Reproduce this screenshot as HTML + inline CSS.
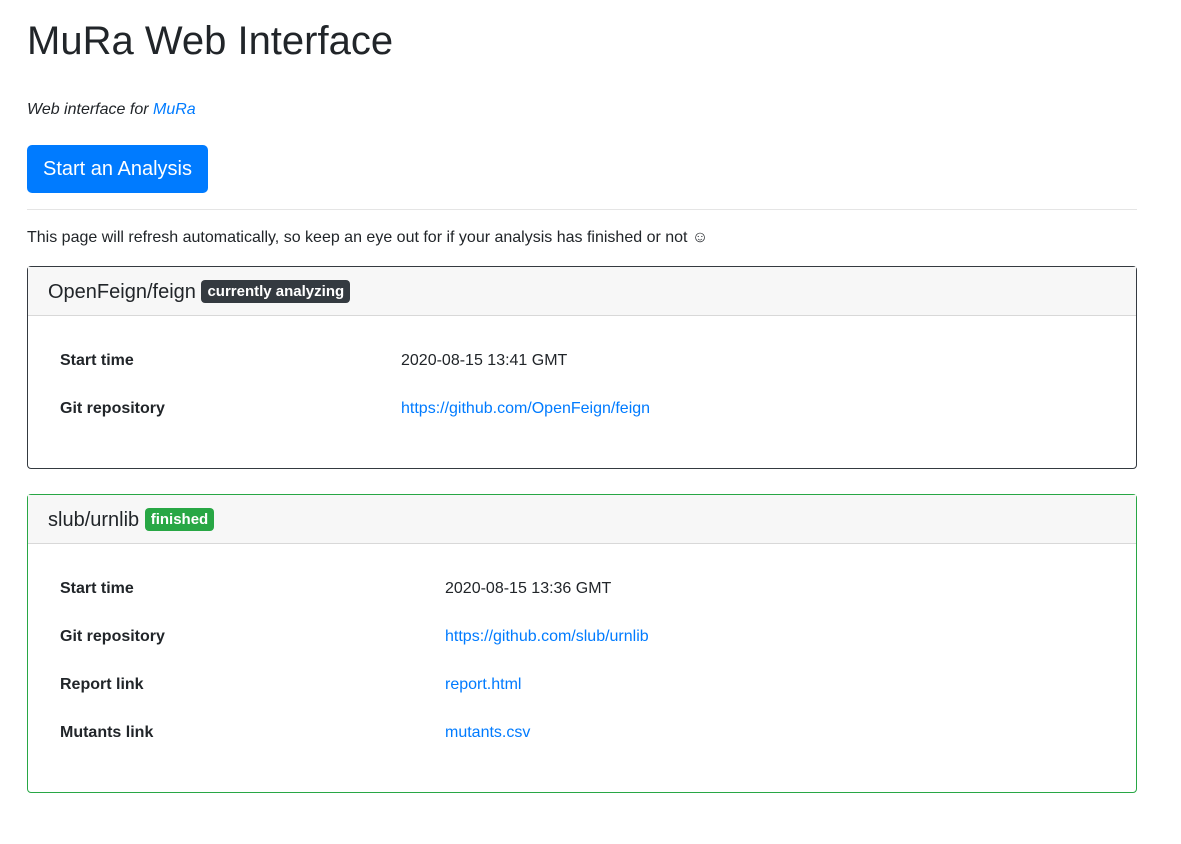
<!DOCTYPE html>
<html><head><meta charset="utf-8"><style>
*{box-sizing:border-box}
body{margin:0;font-family:"Liberation Sans",Arial,sans-serif;font-size:16px;line-height:1.5;color:#212529;background:#fff}
.c{position:absolute;left:27px;width:1110px;top:17px}
h1{font-size:40px;font-weight:500;line-height:48px;margin:0 0 8px;}
p{margin:0 0 16px}
a{color:#007bff;text-decoration:none}
.sub{margin-top:33px;font-style:italic}
.btn{display:inline-block;background:#007bff;color:#fff;font-size:20px;line-height:30px;padding:9px 16px;border-radius:5px;margin-top:7px}
hr{border:0;border-top:1px solid rgba(0,0,0,.1);margin:16px 0}
.card{border:1px solid #343a40;border-radius:4px;margin-bottom:25px}
.card.g{border-color:#28a745}
.hd{background:#f7f7f7;border-bottom:1px solid rgba(0,0,0,.125);padding:1px 20px 0;height:49px;font-size:20px;line-height:48px}
.b{font-size:75%;font-weight:700;color:#fff;padding:3px 6px;border-radius:4px;vertical-align:2px;line-height:1}
.bd{padding:21px 20px 19px}
table{border-collapse:collapse;width:100%;margin-bottom:16px}
td{padding:12px;height:48px}
td:first-child{font-weight:700}
</style></head><body><div class="c">
<h1>MuRa Web Interface</h1>
<p class="sub">Web interface for <a>MuRa</a></p>
<a class="btn">Start an Analysis</a>
<hr>
<p>This page will refresh automatically, so keep an eye out for if your analysis has finished or not ☺</p>
<div class="card"><div class="hd">OpenFeign/feign <span class="b" style="background:#343a40">currently analyzing</span></div>
<div class="bd"><table><tr><td style="width:341px">Start time</td><td>2020-08-15 13:41 GMT</td></tr><tr><td>Git repository</td><td><a>https://github.com/OpenFeign/feign</a></td></tr></table></div></div>
<div class="card g"><div class="hd">slub/urnlib <span class="b" style="background:#28a745">finished</span></div>
<div class="bd"><table><tr><td style="width:385px">Start time</td><td>2020-08-15 13:36 GMT</td></tr><tr><td>Git repository</td><td><a>https://github.com/slub/urnlib</a></td></tr><tr><td>Report link</td><td><a>report.html</a></td></tr><tr><td>Mutants link</td><td><a>mutants.csv</a></td></tr></table></div></div>
</div></body></html>
